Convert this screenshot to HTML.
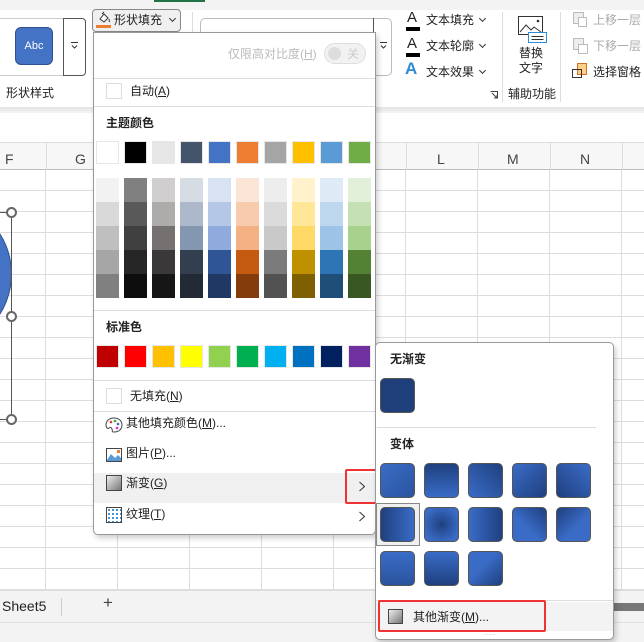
<!DOCTYPE html>
<html><head><meta charset="utf-8">
<style>
*{margin:0;padding:0;box-sizing:border-box}
body{width:644px;height:642px;overflow:hidden;background:#fff;font-family:"Liberation Sans","Noto Sans CJK SC",sans-serif;font-size:12px;color:#222;position:relative}
.a{position:absolute}
.t{position:absolute;white-space:nowrap;line-height:14px}
.sw{position:absolute;width:23px;height:23px;border:1px solid #e6e6e6}
.gc{position:absolute;width:23px;height:24px}
.g{position:absolute;width:35px;height:35px;border:1px solid #555;border-radius:5px}
.sep{position:absolute;height:1px;background:#ddd}
.cv{position:absolute;width:5px;height:5px;border-right:1px solid #333;border-bottom:1px solid #333;transform:rotate(45deg)}
u{text-decoration:underline}
</style></head><body>
<div class="a" style="left:0;top:0;width:644px;height:10px;background:#f3f3f3"></div>
<div class="a" style="left:154px;top:0;width:51px;height:2px;background:#217346"></div>
<div class="a" style="left:0;top:10px;width:644px;height:97px;background:#fff"></div>
<div class="a" style="left:0;top:107px;width:644px;height:6px;background:linear-gradient(#e4e4e4,#f4f4f4)"></div>
<div class="a" style="left:-5px;top:18px;width:91px;height:58px;border:1px solid #ccc;border-radius:5px"></div>
<div class="a" style="left:15px;top:27px;width:38px;height:38px;background:#4472c4;border:1px solid #2f528f;border-radius:6px;color:#fff;font-size:11px;text-align:center;line-height:36px">Abc</div>
<div class="a" style="left:63px;top:18px;width:23px;height:58px;border:1px solid #555;border-radius:0 4px 4px 0;background:#fff"></div>
<svg class="a" style="left:70px;top:41px" width="9" height="9"><path d="M1 1.5H8M2 4.5L4.5 7L7 4.5" fill="none" stroke="#333"/></svg>
<div class="t" style="left:6px;top:86px">形状样式</div>
<div class="a" style="left:92px;top:9px;width:89px;height:23px;border:1px solid #888;border-radius:4px;background:#f0f0f0"></div>
<svg class="a" style="left:97px;top:11px" width="14" height="13"><path d="M3 8L7 3L11 7L7 11z" fill="#fff" stroke="#333"/><path d="M5 3L7 1" stroke="#333"/><path d="M12 8c0 1 1 2 0 3" stroke="#333" fill="none"/></svg>
<div class="a" style="left:96px;top:25px;width:15px;height:3px;background:#ed7d31"></div>
<div class="t" style="left:114px;top:13px">形状填充</div>
<div class="cv" style="left:170px;top:16px"></div>
<div class="a" style="left:200px;top:18px;width:192px;height:58px;border:1px solid #bbb;border-radius:5px"></div>
<div class="a" style="left:373px;top:18px;width:19px;height:58px;border-left:1px solid #555"></div>
<svg class="a" style="left:379px;top:41px" width="9" height="9"><path d="M1 1.5H8M2 4.5L4.5 7L7 4.5" fill="none" stroke="#333"/></svg>
<div class="a" style="left:192px;top:12px;width:1px;height:90px;background:#ddd"></div>
<div class="t" style="left:407px;top:11px;font-size:15px">A</div><div class="a" style="left:406px;top:27px;width:14px;height:4px;background:#000"></div>
<div class="t" style="left:426px;top:13px">文本填充</div><div class="cv" style="left:480px;top:16px"></div>
<div class="t" style="left:407px;top:37px;font-size:15px">A</div><div class="a" style="left:406px;top:53px;width:14px;height:4px;background:#000"></div>
<div class="t" style="left:426px;top:39px">文本轮廓</div><div class="cv" style="left:480px;top:42px"></div>
<div class="t" style="left:405px;top:62px;font-size:17px;font-weight:bold;color:#2e8bd6">A</div>
<div class="t" style="left:426px;top:65px">文本效果</div><div class="cv" style="left:480px;top:68px"></div>
<svg class="a" style="left:490px;top:91px" width="8" height="8"><path d="M.5 .5H7.5V7.5M2 2L7 7M4 7H7V4" fill="none" stroke="#444"/></svg>
<div class="a" style="left:502px;top:12px;width:1px;height:90px;background:#ddd"></div>
<svg class="a" style="left:517px;top:15px" width="31" height="29"><rect x="1.5" y="1.5" width="24" height="18" fill="#fff" stroke="#333"/><path d="M3 17 L9 10 L14 15 L17 12 L24 17" fill="none" stroke="#333"/><circle cx="21" cy="6" r="1.3" fill="#333"/><rect x="11.5" y="17.5" width="18" height="10" fill="#fff" stroke="#2e8bd6"/><path d="M14.5 21.5H26.5M14.5 24.5H26.5" stroke="#333"/></svg>
<div class="t" style="left:519px;top:46px">替换</div>
<div class="t" style="left:519px;top:61px">文字</div>
<div class="t" style="left:508px;top:87px">辅助功能</div>
<div class="a" style="left:560px;top:12px;width:1px;height:90px;background:#ddd"></div>
<div class="a" style="left:573px;top:12px;width:11px;height:12px;border:1px solid #bbb;background:#eee"></div><div class="a" style="left:578px;top:17px;width:9px;height:10px;border:1px solid #bbb;background:#fff"></div>
<div class="t" style="left:593px;top:13px;color:#aaa">上移一层</div>
<div class="a" style="left:573px;top:38px;width:11px;height:12px;border:1px solid #bbb;background:#eee"></div><div class="a" style="left:578px;top:44px;width:10px;height:10px;border:1px solid #bbb;background:#fff"></div>
<div class="t" style="left:593px;top:39px;color:#aaa">下移一层</div>
<div class="a" style="left:577px;top:63px;width:10px;height:12px;border:1px solid #d07020;background:#fbd18a"></div><div class="a" style="left:572px;top:69px;width:10px;height:9px;border:1px solid #333"></div>
<div class="t" style="left:593px;top:65px">选择窗格</div>
<div class="a" style="left:0;top:142px;width:644px;height:28px;background:#f7f7f7;border-top:1px solid #ddd;border-bottom:1px solid #bbb"></div>
<div class="t" style="left:5px;top:152px;font-size:14px;color:#444">F</div>
<div class="t" style="left:75px;top:152px;font-size:14px;color:#444">G</div>
<div class="t" style="left:437px;top:152px;font-size:14px;color:#444">L</div>
<div class="t" style="left:507px;top:152px;font-size:14px;color:#444">M</div>
<div class="t" style="left:580px;top:152px;font-size:14px;color:#444">N</div>
<div class="a" style="left:0;top:170px;width:644px;height:420px;background-image:linear-gradient(90deg,transparent 0 45px,#ddd 45px 46px,transparent 46px),linear-gradient(transparent 0 20px,#ddd 20px 21px);background-size:72px 100%,100% 21px;background-position:0 0,0 0"></div>
<div class="a" style="left:46px;top:142px;width:1px;height:28px;background:#ddd;box-shadow:72px 0 #ddd,360px 0 #ddd,432px 0 #ddd,504px 0 #ddd,576px 0 #ddd"></div>
<div class="a" style="left:-132px;top:200px;width:144px;height:148px;border-radius:50%;background:#4472c4;border:1px solid #2f528f"></div>
<div class="a" style="left:11px;top:212px;width:1px;height:207px;background:#555"></div>
<div class="a" style="left:0;top:212px;width:11px;height:1px;background:#555"></div>
<div class="a" style="left:0;top:419px;width:11px;height:1px;background:#555"></div>
<div class="a" style="left:6px;top:207px;width:11px;height:11px;border:2px solid #666;border-radius:50%;background:#fff"></div>
<div class="a" style="left:6px;top:311px;width:11px;height:11px;border:2px solid #666;border-radius:50%;background:#fff"></div>
<div class="a" style="left:6px;top:414px;width:11px;height:11px;border:2px solid #666;border-radius:50%;background:#fff"></div>
<div class="a" style="left:0;top:590px;width:644px;height:32px;background:#f3f3f3;border-top:1px solid #ddd"></div>
<div class="t" style="left:2px;top:599px;font-size:14px">Sheet5</div>
<div class="a" style="left:61px;top:598px;width:1px;height:18px;background:#ccc"></div>
<div class="t" style="left:103px;top:596px;font-size:17px;color:#444">+</div>
<div class="a" style="left:0;top:622px;width:644px;height:20px;background:#f3f3f3;border-top:1px solid #e0e0e0"></div>
<div class="a" style="left:614px;top:603px;width:30px;height:8px;background:#777"></div>

<div class="a" style="left:93px;top:32px;width:283px;height:503px;background:#fff;border:1px solid #999;border-radius:0 0 5px 5px;box-shadow:2px 3px 6px rgba(0,0,0,.2)"></div>
<div class="t" style="left:228px;top:47px;color:#bbb">仅限高对比度(<u>H</u>)</div>
<div class="a" style="left:324px;top:43px;width:42px;height:21px;border:1px solid #ddd;border-radius:11px;background:#f2f2f2"></div>
<div class="a" style="left:328px;top:47px;width:13px;height:13px;border-radius:50%;background:#ddd"></div>
<div class="t" style="left:347px;top:47px;color:#ccc">关</div>
<div class="sep" style="left:94px;top:78px;width:281px"></div>
<div class="a" style="left:106px;top:83px;width:16px;height:16px;border:1px solid #ddd"></div>
<div class="t" style="left:130px;top:84px">自动(<u>A</u>)</div>
<div class="sep" style="left:94px;top:106px;width:281px"></div>
<div class="t" style="left:106px;top:116px;font-weight:bold">主题颜色</div>
<div class="sw" style="left:96px;top:141px;background:#fff"></div>
<div class="sw" style="left:124px;top:141px;background:#000"></div>
<div class="sw" style="left:152px;top:141px;background:#e7e6e6"></div>
<div class="sw" style="left:180px;top:141px;background:#44546a"></div>
<div class="sw" style="left:208px;top:141px;background:#4472c4"></div>
<div class="sw" style="left:236px;top:141px;background:#ed7d31"></div>
<div class="sw" style="left:264px;top:141px;background:#a5a5a5"></div>
<div class="sw" style="left:292px;top:141px;background:#ffc000"></div>
<div class="sw" style="left:320px;top:141px;background:#5b9bd5"></div>
<div class="sw" style="left:348px;top:141px;background:#70ad47"></div>
<div class="gc" style="left:96px;top:178px;background:#f2f2f2"></div><div class="gc" style="left:96px;top:202px;background:#d9d9d9"></div><div class="gc" style="left:96px;top:226px;background:#bfbfbf"></div><div class="gc" style="left:96px;top:250px;background:#a6a6a6"></div><div class="gc" style="left:96px;top:274px;background:#808080"></div>
<div class="gc" style="left:124px;top:178px;background:#808080"></div><div class="gc" style="left:124px;top:202px;background:#595959"></div><div class="gc" style="left:124px;top:226px;background:#404040"></div><div class="gc" style="left:124px;top:250px;background:#262626"></div><div class="gc" style="left:124px;top:274px;background:#0d0d0d"></div>
<div class="gc" style="left:152px;top:178px;background:#d0cece"></div><div class="gc" style="left:152px;top:202px;background:#aeabab"></div><div class="gc" style="left:152px;top:226px;background:#757171"></div><div class="gc" style="left:152px;top:250px;background:#3a3838"></div><div class="gc" style="left:152px;top:274px;background:#171616"></div>
<div class="gc" style="left:180px;top:178px;background:#d6dce4"></div><div class="gc" style="left:180px;top:202px;background:#adb9ca"></div><div class="gc" style="left:180px;top:226px;background:#8497b0"></div><div class="gc" style="left:180px;top:250px;background:#333f4f"></div><div class="gc" style="left:180px;top:274px;background:#222a35"></div>
<div class="gc" style="left:208px;top:178px;background:#d9e2f3"></div><div class="gc" style="left:208px;top:202px;background:#b4c7e7"></div><div class="gc" style="left:208px;top:226px;background:#8faadc"></div><div class="gc" style="left:208px;top:250px;background:#2f5597"></div><div class="gc" style="left:208px;top:274px;background:#1f3864"></div>
<div class="gc" style="left:236px;top:178px;background:#fbe5d6"></div><div class="gc" style="left:236px;top:202px;background:#f8cbad"></div><div class="gc" style="left:236px;top:226px;background:#f4b183"></div><div class="gc" style="left:236px;top:250px;background:#c55a11"></div><div class="gc" style="left:236px;top:274px;background:#843c0c"></div>
<div class="gc" style="left:264px;top:178px;background:#ededed"></div><div class="gc" style="left:264px;top:202px;background:#dbdbdb"></div><div class="gc" style="left:264px;top:226px;background:#c9c9c9"></div><div class="gc" style="left:264px;top:250px;background:#7b7b7b"></div><div class="gc" style="left:264px;top:274px;background:#525252"></div>
<div class="gc" style="left:292px;top:178px;background:#fff2cc"></div><div class="gc" style="left:292px;top:202px;background:#ffe699"></div><div class="gc" style="left:292px;top:226px;background:#ffd966"></div><div class="gc" style="left:292px;top:250px;background:#bf9000"></div><div class="gc" style="left:292px;top:274px;background:#7f6000"></div>
<div class="gc" style="left:320px;top:178px;background:#deebf7"></div><div class="gc" style="left:320px;top:202px;background:#bdd7ee"></div><div class="gc" style="left:320px;top:226px;background:#9dc3e6"></div><div class="gc" style="left:320px;top:250px;background:#2e75b6"></div><div class="gc" style="left:320px;top:274px;background:#1f4e79"></div>
<div class="gc" style="left:348px;top:178px;background:#e2f0d9"></div><div class="gc" style="left:348px;top:202px;background:#c5e0b4"></div><div class="gc" style="left:348px;top:226px;background:#a9d18e"></div><div class="gc" style="left:348px;top:250px;background:#548235"></div><div class="gc" style="left:348px;top:274px;background:#385723"></div>
<div class="sep" style="left:94px;top:310px;width:281px"></div>
<div class="t" style="left:106px;top:320px;font-weight:bold">标准色</div>
<div class="sw" style="left:96px;top:345px;background:#c00000"></div>
<div class="sw" style="left:124px;top:345px;background:#f00"></div>
<div class="sw" style="left:152px;top:345px;background:#ffc000"></div>
<div class="sw" style="left:180px;top:345px;background:#ff0"></div>
<div class="sw" style="left:208px;top:345px;background:#92d050"></div>
<div class="sw" style="left:236px;top:345px;background:#00b050"></div>
<div class="sw" style="left:264px;top:345px;background:#00b0f0"></div>
<div class="sw" style="left:292px;top:345px;background:#0070c0"></div>
<div class="sw" style="left:320px;top:345px;background:#002060"></div>
<div class="sw" style="left:348px;top:345px;background:#7030a0"></div>
<div class="sep" style="left:94px;top:380px;width:281px"></div>
<div class="a" style="left:106px;top:388px;width:16px;height:16px;border:1px solid #ddd"></div>
<div class="t" style="left:130px;top:389px">无填充(<u>N</u>)</div>
<div class="sep" style="left:94px;top:411px;width:281px"></div>
<svg class="a" style="left:105px;top:417px" width="18" height="16"><path d="M9 1C4 1 1 4 1 8c0 3 2 4 3 3s2-1 3 1-1 3 2 3c5 0 8-3 8-7S14 1 9 1z" fill="#fff" stroke="#444"/><circle cx="6" cy="5" r="1.3" fill="#e33"/><circle cx="10" cy="4" r="1.3" fill="#3a3"/><circle cx="13" cy="7" r="1.3" fill="#36c"/><circle cx="12" cy="11" r="1.3" fill="#c3c"/></svg>
<div class="t" style="left:126px;top:416px">其他填充颜色(<u>M</u>)...</div>
<svg class="a" style="left:106px;top:448px" width="16" height="14"><rect x=".5" y=".5" width="15" height="13" fill="#fff" stroke="#444"/><path d="M1 12 L5 6 L9 10 L12 7 L15 10 L15 13 L1 13z" fill="#5b9bd5"/><rect x="11" y="2" width="3" height="3" fill="#ed7d31"/></svg>
<div class="t" style="left:126px;top:446px">图片(<u>P</u>)...</div>
<div class="a" style="left:94px;top:473px;width:281px;height:30px;background:#f0f0f0"></div>
<div class="a" style="left:106px;top:475px;width:16px;height:16px;border:1px solid #444;background:linear-gradient(135deg,#eee,#777)"></div>
<div class="t" style="left:126px;top:476px">渐变(<u>G</u>)</div>
<svg class="a" style="left:358px;top:481px" width="8" height="11"><path d="M1.5 1L6.5 5.5L1.5 10" fill="none" stroke="#333"/></svg>
<div class="a" style="left:345px;top:469px;width:33px;height:35px;border:2px solid #e33;border-radius:2px"></div>
<div class="a" style="left:106px;top:507px;width:16px;height:16px;border:1px solid #444;background:radial-gradient(#2e8bd6 1px,transparent 1.2px) 0 0/4px 4px #fff"></div>
<div class="t" style="left:126px;top:507px">纹理(<u>T</u>)</div>
<svg class="a" style="left:358px;top:511px" width="8" height="11"><path d="M1.5 1L6.5 5.5L1.5 10" fill="none" stroke="#333"/></svg>

<div class="a" style="left:375px;top:342px;width:239px;height:298px;background:#fff;border:1px solid #999;border-radius:5px;box-shadow:2px 3px 6px rgba(0,0,0,.2)"></div>
<div class="t" style="left:390px;top:352px;font-weight:bold">无渐变</div>
<div class="g" style="left:380px;top:378px;background:#1f3f7a"></div>
<div class="sep" style="left:377px;top:427px;width:219px"></div>
<div class="t" style="left:390px;top:437px;font-weight:bold">变体</div>
<div class="a" style="left:376px;top:503px;width:44px;height:43px;border:1px solid #888;background:#f0f0f0"></div>
<div class="g" style="left:380px;top:463px;background:linear-gradient(135deg,#3a6cc7,#2a549e)"></div>
<div class="g" style="left:424px;top:463px;background:linear-gradient(180deg,#1f407f,#3a6cc7)"></div>
<div class="g" style="left:468px;top:463px;background:linear-gradient(225deg,#1f407f,#3a6cc7)"></div>
<div class="g" style="left:512px;top:463px;background:linear-gradient(315deg,#1f407f,#3a6cc7)"></div>
<div class="g" style="left:556px;top:463px;background:linear-gradient(45deg,#1f407f,#3a6cc7)"></div>
<div class="g" style="left:380px;top:507px;background:linear-gradient(90deg,#1f407f,#3a6cc7)"></div>
<div class="g" style="left:424px;top:507px;background:radial-gradient(#1f407f,#3a6cc7 80%)"></div>
<div class="g" style="left:468px;top:507px;background:linear-gradient(90deg,#3a6cc7,#1f407f)"></div>
<div class="g" style="left:512px;top:507px;background:linear-gradient(225deg,#1f407f,#3a6cc7 60%)"></div>
<div class="g" style="left:556px;top:507px;background:linear-gradient(135deg,#1f407f,#3a6cc7 60%)"></div>
<div class="g" style="left:380px;top:551px;background:linear-gradient(0deg,#2a549e,#3a6cc7)"></div>
<div class="g" style="left:424px;top:551px;background:linear-gradient(0deg,#1f407f,#3a6cc7)"></div>
<div class="g" style="left:468px;top:551px;background:linear-gradient(315deg,#1f407f,#3a6cc7 60%)"></div>
<div class="sep" style="left:376px;top:600px;width:237px"></div>
<div class="a" style="left:376px;top:602px;width:237px;height:29px;background:#f3f3f3"></div>
<div class="a" style="left:388px;top:609px;width:15px;height:15px;border:1px solid #444;background:linear-gradient(135deg,#eee,#777)"></div>
<div class="t" style="left:413px;top:610px">其他渐变(<u>M</u>)...</div>
<div class="a" style="left:378px;top:600px;width:168px;height:32px;border:2px solid #e33;border-radius:2px"></div>
<div class="t" style="left:484px;top:628px;font-size:8px;color:#bbb">····</div>
</body></html>
